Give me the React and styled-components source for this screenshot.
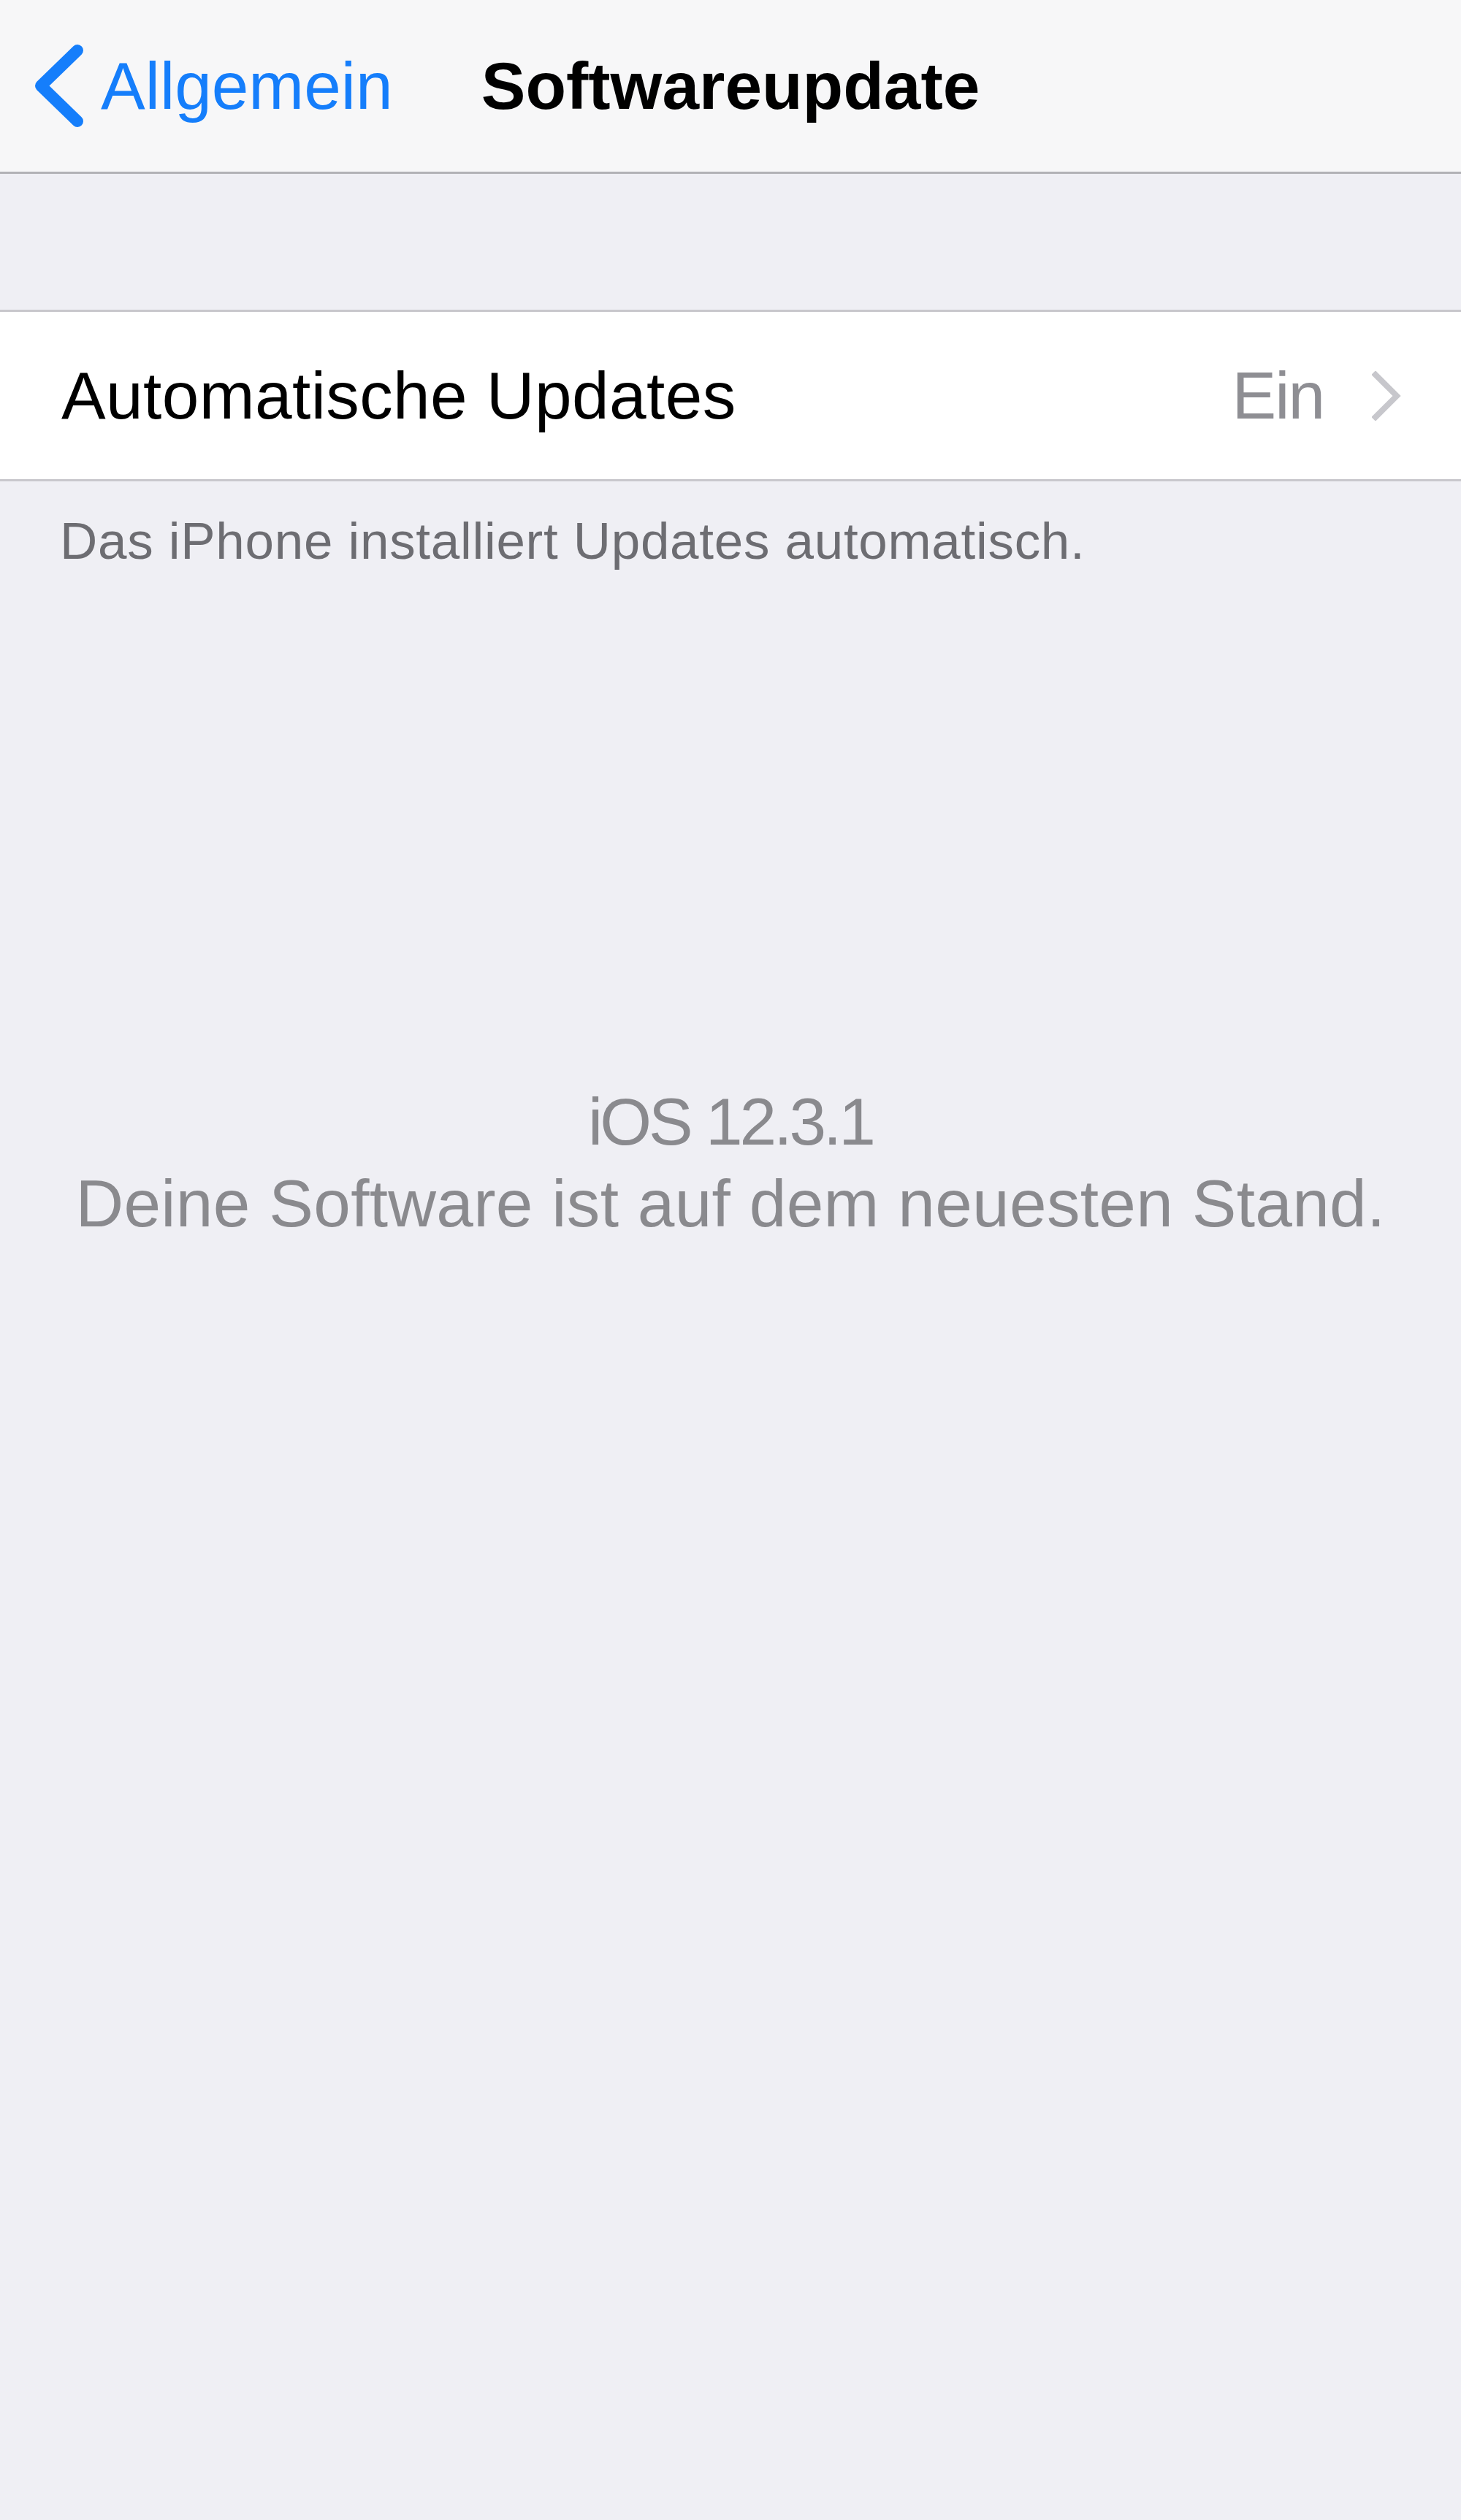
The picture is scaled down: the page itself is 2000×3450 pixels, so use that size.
import React from "react";
import styled, { createGlobalStyle } from "styled-components";

const GlobalStyle = createGlobalStyle`
	html, body {
		margin: 0;
		padding: 0;
		background: #efeff4;
	}
	body {
		font-family: "Liberation Sans", Arial, sans-serif;
	}
`;

// Styled components
const Screen = styled.div`
	width: 2000px;
	min-height: 3450px;
	background: #efeff4;
	display: flex;
	flex-direction: column;
`;

const NavBar = styled.header`
	height: 235px;
	background: #f7f7f8;
	border-bottom: 3px solid #b2b2b6;
	display: grid;
	grid-template-columns: 1fr auto 1fr;
	align-items: center;
	line-height: 110px;
`;

const BackButton = styled.button`
	justify-self: start;
	display: flex;
	align-items: center;
	gap: 22px;
	padding: 0 0 0 46px;
	background: none;
	border: none;
	color: #157efb;
	font-family: inherit;
	font-size: 91px;
	line-height: 110px;
	cursor: pointer;
`;

const Title = styled.h1`
	margin: 0;
	font-size: 91px;
	font-weight: 700;
	color: #000;
`;

const Spacer = styled.div`
	height: 186px;
`;

const Group = styled.section`
	background: #fff;
	border-top: 3px solid #c8c7cc;
	border-bottom: 3px solid #c8c7cc;
`;

const Row = styled.div`
	height: 229px;
	display: flex;
	align-items: center;
	padding: 0 82px 0 84px;
	font-size: 91px;
	line-height: 110px;
`;

const Label = styled.span`
	flex: 1;
	color: #000;
	letter-spacing: 0.4px;
`;

const Value = styled.span`
	color: #8e8e93;
	margin-right: 66px;
	letter-spacing: -2px;
`;

const Footer = styled.p`
	margin: 39px 0 0;
	padding: 0 82px;
	font-size: 71px;
	line-height: 85px;
	letter-spacing: 0.7px;
	color: #6d6d72;
`;

const Status = styled.div`
	margin-top: 697px;
	text-align: center;
	color: #8a8a8e;
	font-size: 91px;
	line-height: 112px;
`;

const Version = styled.div`
	letter-spacing: -4px;
`;

const Message = styled.div`
	letter-spacing: 0.3px;
`;

const BackChevron = () => (
	<svg width="70" height="115" viewBox="0 0 70 115">
		<path
			d="M60 9 L10 57.5 L60 106"
			fill="none"
			stroke="#157efb"
			strokeWidth="16"
			strokeLinecap="round"
			strokeLinejoin="round"
		/>
	</svg>
);

const Disclosure = () => (
	<svg width="40" height="68" viewBox="0 0 40 68">
		<path
			d="M5 5 L34 34 L5 63"
			fill="none"
			stroke="#c7c7cc"
			strokeWidth="8"
			strokeLinecap="square"
		/>
	</svg>
);

const App = () => {
	return (
		<Screen>
			<GlobalStyle />
			<NavBar>
				<BackButton>
					<BackChevron />
					Allgemein
				</BackButton>
				<Title>Softwareupdate</Title>
				<div />
			</NavBar>
			<Spacer />
			<Group>
				<Row>
					<Label>Automatische Updates</Label>
					<Value>Ein</Value>
					<Disclosure />
				</Row>
			</Group>
			<Footer>Das iPhone installiert Updates automatisch.</Footer>
			<Status>
				<Version>iOS 12.3.1</Version>
				<Message>Deine Software ist auf dem neuesten Stand.</Message>
			</Status>
		</Screen>
	);
};

export default App;
